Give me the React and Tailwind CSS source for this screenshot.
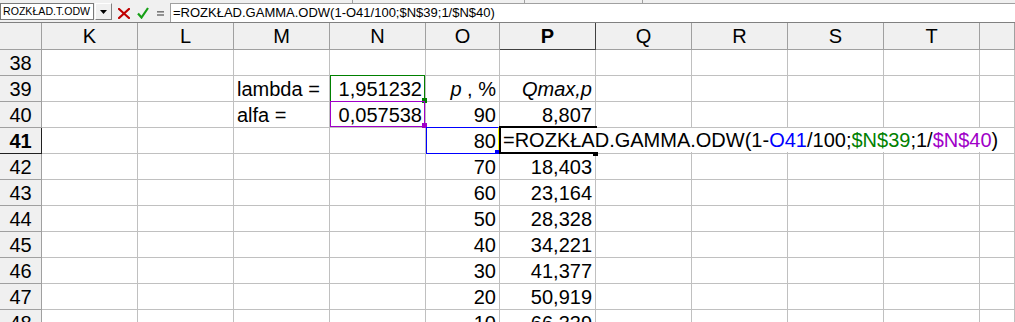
import React from 'react';

const COLS = ['K', 'L', 'M', 'N', 'O', 'P', 'Q', 'R', 'S', 'T', 'U'];

const data = {
  39: { M: 'lambda =', N: '1,951232', O: 'pct', P: 'qmax' },
  40: { M: 'alfa =', N: '0,057538', O: '90', P: '8,807' },
  41: { O: '80' },
  42: { O: '70', P: '18,403' },
  43: { O: '60', P: '23,164' },
  44: { O: '50', P: '28,328' },
  45: { O: '40', P: '34,221' },
  46: { O: '30', P: '41,377' },
  47: { O: '20', P: '50,919' },
  48: { O: '10', P: '66,339' },
};

const ROWS = [38, 39, 40, 41, 42, 43, 44, 45, 46, 47, 48];

function CellContent({ v }) {
  if (v === 'pct') {
    return (
      <span>
        <i>p</i> , %
      </span>
    );
  }
  if (v === 'qmax') return <i>Qmax,p</i>;
  return v;
}

export default function App() {
  const gridCols =
    'grid grid-cols-[42px_96px_96px_96px_96px_74px_96px_96px_96px_96px_96px_35px]';
  return (
    <div className="relative w-[1015px] h-[322px] overflow-hidden bg-white font-['Liberation_Sans',Arial,sans-serif] text-black">
      {/* formula bar */}
      <div className="h-[22px] bg-[#f0f0f0] flex flex-col">
        <div className="h-[3px] flex">
          <div className="w-[353px] border-r border-[#a0a0a0]" />
          <div className="w-[172px] border-r border-[#a0a0a0]" />
          <div className="w-[118px] border-r border-[#a0a0a0]" />
        </div>
        <div className="h-[19px] flex items-start">
          <div className="w-[94px] h-[17px] bg-white border border-[#7a7a7a] text-[10.6px] leading-[15px] pl-[2px] whitespace-nowrap overflow-hidden">
            ROZKŁAD.T.ODW
          </div>
          <div className="ml-[1px] w-[17px] h-[17px] bg-[#f0f0f0] border border-t-white border-l-white border-r-[#808080] border-b-[#808080] flex items-center justify-center">
            <svg width="7" height="4" viewBox="0 0 7 4">
              <path d="M0 0 L7 0 L3.5 4 Z" fill="#000" />
            </svg>
          </div>
          <svg className="ml-[6px] mt-[5px]" width="12" height="11" viewBox="0 0 12 11">
            <path d="M1 1 L11 10 M11 1 L1 10" stroke="#c00000" strokeWidth="2.2" strokeLinecap="square" />
          </svg>
          <svg className="ml-[7px] mt-[4px]" width="12" height="12" viewBox="0 0 12 12">
            <path d="M1 6.5 L4.5 10.5 L11 1" stroke="#17a017" strokeWidth="2.2" fill="none" />
          </svg>
          <svg className="ml-[8px] mt-[8px]" width="7" height="5" viewBox="0 0 7 5">
            <rect x="0" y="0" width="7" height="1.6" fill="#7a7a7a" />
            <rect x="0" y="3.2" width="7" height="1.6" fill="#7a7a7a" />
          </svg>
          <div className="ml-[6px] flex-1 h-[19px] bg-white border-l border-t border-[#a0a0a0] text-[13px] leading-[17px] pl-[2px] whitespace-nowrap">
            =ROZKŁAD.GAMMA.ODW(1-O41/100;$N$39;1/$N$40)
          </div>
        </div>
      </div>

      {/* column headers */}
      <div className={`${gridCols} border-t border-[#808080] bg-[#f0f0f0]`}>
        <div className="h-[27px] border-r border-b border-[#a0a0a0]" />
        {COLS.map((c) =>
          c === 'P' ? (
            <div
              key={c}
              className="h-[27px] border-r border-b border-r-[#404040] border-b-[#404040] text-center text-[20px] leading-[26px] font-bold"
            >
              {c}
            </div>
          ) : (
            <div
              key={c}
              className="h-[27px] border-r border-b border-[#a0a0a0] text-center text-[20px] leading-[26px]"
            >
              {c === 'U' ? '' : c}
            </div>
          )
        )}
      </div>

      {/* rows */}
      {ROWS.map((r) => (
        <div key={r} className={gridCols}>
          {r === 41 ? (
            <div className="h-[26px] bg-[#f0f0f0] border-r border-b border-r-[#202020] border-b-[#202020] text-center text-[20px] leading-[24px] pt-[1px] font-bold">
              {r}
            </div>
          ) : (
            <div className="h-[26px] bg-[#f0f0f0] border-r border-b border-[#a0a0a0] text-center text-[20px] leading-[24px] pt-[1px]">
              {r}
            </div>
          )}
          {COLS.map((c) => {
            const v = data[r] && data[r][c];
            const left = c === 'M';
            return (
              <div
                key={c}
                className={
                  left
                    ? 'h-[26px] border-r border-b border-[#c0c0c0] text-[20px] leading-[24px] pt-[1px] pl-[3px] whitespace-nowrap overflow-hidden text-left'
                    : 'h-[26px] border-r border-b border-[#c0c0c0] text-[20px] leading-[24px] pt-[1px] pr-[3px] whitespace-nowrap overflow-hidden text-right'
                }
              >
                {v ? <CellContent v={v} /> : null}
              </div>
            );
          })}
        </div>
      ))}

      {/* range highlight boxes */}
      <div className="absolute left-[330px] top-[75px] w-[95px] h-[27px] border border-[#008000]" />
      <div className="absolute left-[422px] top-[98px] w-[5px] h-[5px] bg-[#008000]" />
      <div className="absolute left-[330px] top-[101px] w-[95px] h-[26px] border border-[#a000c8]" />
      <div className="absolute left-[422px] top-[123px] w-[5px] h-[5px] bg-[#a000c8]" />
      <div className="absolute left-[426px] top-[127px] w-[73px] h-[27px] border border-[#0000ff] border-r-[#ffff00]" />
      <div className="absolute left-[495px] top-[150px] w-[4px] h-[4px] bg-[#0000ff]" />

      {/* active cell */}
      <div className="absolute left-[499px] top-[126px] w-[98px] h-[28px] border-2 border-black" />
      <div className="absolute left-[501px] top-[128px] w-[500px] h-[24px] bg-white text-[20px] leading-[24px] pl-[2px] whitespace-nowrap">
        =ROZKŁAD.GAMMA.ODW(1-<span className="text-[#0000ff]">O41</span>/100;
        <span className="text-[#008000]">$N$39</span>;1/
        <span className="text-[#a000c8]">$N$40</span>)
      </div>
      <div className="absolute left-[593px] top-[152px] w-[5px] h-[4px] bg-black" />
    </div>
  );
}
